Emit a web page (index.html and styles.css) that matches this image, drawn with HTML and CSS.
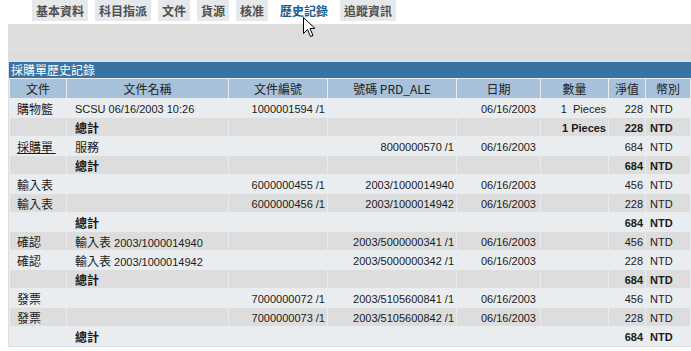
FILE: index.html
```html
<!DOCTYPE html>
<html lang="zh-Hant">
<head>
    <meta charset="UTF-8">
    <meta name="viewport" content="width=device-width, initial-scale=1.0">
    <title>採購單歷史記錄</title>
    <link rel="stylesheet" href="styles.css">
</head>
<body>
    <ul class="tabs">
        <li>基本資料</li>
        <li>科目指派</li>
        <li>文件</li>
        <li>貨源</li>
        <li>核准</li>
        <li class="active">歷史記錄</li>
        <li>追蹤資訊</li>
    </ul>

    <div class="panel">
        <div class="toolbar"></div>
        <div class="title">採購單歷史記錄</div>
        <table class="history">
            <colgroup>
                <col class="w-doc">
                <col class="w-name">
                <col class="w-no">
                <col class="w-ref">
                <col class="w-date">
                <col class="w-qty">
                <col class="w-net">
                <col>
            </colgroup>
            <thead>
                <tr>
                    <th>文件</th>
                    <th>文件名稱</th>
                    <th>文件編號</th>
                    <th>號碼 PRD_ALE</th>
                    <th>日期</th>
                    <th>數量</th>
                    <th>淨值</th>
                    <th>幣別</th>
                </tr>
            </thead>
            <tbody>
                <tr>
                    <td class="doc">購物籃</td>
                    <td class="name">SCSU 06/16/2003 10:26</td>
                    <td class="num">1000001594 /1</td>
                    <td class="num"></td>
                    <td class="date">06/16/2003</td>
                    <td class="num">1&nbsp;&nbsp;Pieces</td>
                    <td class="num">228</td>
                    <td class="cur">NTD</td>
                </tr>
                <tr class="total">
                    <td></td>
                    <td class="name zh">總計</td>
                    <td></td>
                    <td></td>
                    <td></td>
                    <td class="num">1 Pieces</td>
                    <td class="num">228</td>
                    <td class="cur">NTD</td>
                </tr>
                <tr>
                    <td class="doc"><a href="#">採購單&nbsp;</a></td>
                    <td class="name zh">服務</td>
                    <td></td>
                    <td class="num">8000000570 /1</td>
                    <td class="date">06/16/2003</td>
                    <td></td>
                    <td class="num">684</td>
                    <td class="cur">NTD</td>
                </tr>
                <tr class="total">
                    <td></td>
                    <td class="name zh">總計</td>
                    <td></td>
                    <td></td>
                    <td></td>
                    <td></td>
                    <td class="num">684</td>
                    <td class="cur">NTD</td>
                </tr>
                <tr>
                    <td class="doc">輸入表</td>
                    <td></td>
                    <td class="num">6000000455 /1</td>
                    <td class="num">2003/1000014940</td>
                    <td class="date">06/16/2003</td>
                    <td></td>
                    <td class="num">456</td>
                    <td class="cur">NTD</td>
                </tr>
                <tr>
                    <td class="doc">輸入表</td>
                    <td></td>
                    <td class="num">6000000456 /1</td>
                    <td class="num">2003/1000014942</td>
                    <td class="date">06/16/2003</td>
                    <td></td>
                    <td class="num">228</td>
                    <td class="cur">NTD</td>
                </tr>
                <tr class="total">
                    <td></td>
                    <td class="name zh">總計</td>
                    <td></td>
                    <td></td>
                    <td></td>
                    <td></td>
                    <td class="num">684</td>
                    <td class="cur">NTD</td>
                </tr>
                <tr>
                    <td class="doc">確認</td>
                    <td class="name"><span class="zh">輸入表</span> 2003/1000014940</td>
                    <td></td>
                    <td class="num">2003/5000000341 /1</td>
                    <td class="date">06/16/2003</td>
                    <td></td>
                    <td class="num">456</td>
                    <td class="cur">NTD</td>
                </tr>
                <tr>
                    <td class="doc">確認</td>
                    <td class="name"><span class="zh">輸入表</span> 2003/1000014942</td>
                    <td></td>
                    <td class="num">2003/5000000342 /1</td>
                    <td class="date">06/16/2003</td>
                    <td></td>
                    <td class="num">228</td>
                    <td class="cur">NTD</td>
                </tr>
                <tr class="total">
                    <td></td>
                    <td class="name zh">總計</td>
                    <td></td>
                    <td></td>
                    <td></td>
                    <td></td>
                    <td class="num">684</td>
                    <td class="cur">NTD</td>
                </tr>
                <tr>
                    <td class="doc">發票</td>
                    <td></td>
                    <td class="num">7000000072 /1</td>
                    <td class="num">2003/5105600841 /1</td>
                    <td class="date">06/16/2003</td>
                    <td></td>
                    <td class="num">456</td>
                    <td class="cur">NTD</td>
                </tr>
                <tr>
                    <td class="doc">發票</td>
                    <td></td>
                    <td class="num">7000000073 /1</td>
                    <td class="num">2003/5105600842 /1</td>
                    <td class="date">06/16/2003</td>
                    <td></td>
                    <td class="num">228</td>
                    <td class="cur">NTD</td>
                </tr>
                <tr class="total">
                    <td></td>
                    <td class="name zh">總計</td>
                    <td></td>
                    <td></td>
                    <td></td>
                    <td></td>
                    <td class="num">684</td>
                    <td class="cur">NTD</td>
                </tr>
            </tbody>
        </table>
    </div>

    <!-- mouse pointer resting on the active tab -->
    <svg class="pointer" width="14" height="22" viewBox="0 0 14 22">
        <path d="M0.5 0.5 L0.5 16.5 L4.5 12.5 L7.5 19.5 L10 18.5 L7 11.5 L12 11.5 Z" fill="#fff" stroke="#000" stroke-width="1"/>
    </svg>
</body>
</html>
```

FILE: styles.css
```css
body {
    margin: 0 0 0 8px;
    background-color: #ffffff;
    font-family: "Liberation Sans", "Noto Sans CJK TC", sans-serif;
    font-size: 11px;
    color: #1a1a1a;
    position: relative;
}

/* tab strip */
.tabs {
    list-style: none;
    margin: 0;
    padding: 0 0 0 24px;
    display: flex;
    gap: 7px;
    height: 24px;
}

.tabs li {
    height: 21px;
    line-height: 21px;
    padding: 0 4px;
    background-color: #e6e9ec;
    color: #505050;
    font-family: "Noto Sans CJK TC", sans-serif;
    font-size: 12px;
    font-weight: bold;
}

.tabs li.active {
    height: 24px;
    padding: 0 5px;
    background-color: #ffffff;
    color: #1b5d8e;
}

/* gray panel under the tabs */
.panel {
    background-color: #dddddd;
    padding: 0 0 1px 1px;
}

.toolbar {
    height: 25px;
    border-bottom: 1px solid #e7e2dd;
    margin-bottom: 12px;
}

.title {
    height: 16px;
    line-height: 16px;
    background-color: #3873a2;
    color: #ffffff;
    font-family: "Noto Sans CJK TC", sans-serif;
    font-size: 12px;
    padding-left: 2px;
}

.history {
    width: 100%;
    table-layout: fixed;
    border-spacing: 1px;
    background-color: #eaedf0;
}

.w-doc { width: 56px; }
.w-name { width: 161px; }
.w-no { width: 98px; }
.w-ref { width: 128px; }
.w-date { width: 83px; }
.w-qty { width: 67px; }
.w-net { width: 36px; }

.history th {
    height: 19px;
    padding: 0;
    background-color: #a8c1da;
    color: #222;
    font-family: "Noto Sans CJK TC", sans-serif;
    font-size: 12px;
    font-weight: normal;
    text-align: center;
}

.history td {
    height: 17px;
    padding: 1px 4px 0;
    white-space: nowrap;
    overflow: hidden;
}

.history tbody tr:nth-child(odd) td {
    background-color: #eaedf0;
}

.history tbody tr:nth-child(even) td {
    background-color: #dddddd;
}

.doc {
    font-family: "Noto Sans CJK TC", sans-serif;
    font-size: 12px;
    padding-left: 7px !important;
}

.doc a {
    color: #1a1a1a;
    text-decoration: underline;
}

.name {
    padding-left: 8px !important;
}

.zh {
    font-family: "Noto Sans CJK TC", sans-serif;
    font-size: 12px;
}

.num {
    text-align: right;
    padding-right: 2px !important;
}

.date {
    text-align: right;
    padding-right: 4px !important;
}

.cur {
    text-align: left;
}

.total td {
    font-weight: bold;
}

.pointer {
    position: absolute;
    left: 295px;
    top: 17px;
}
```
